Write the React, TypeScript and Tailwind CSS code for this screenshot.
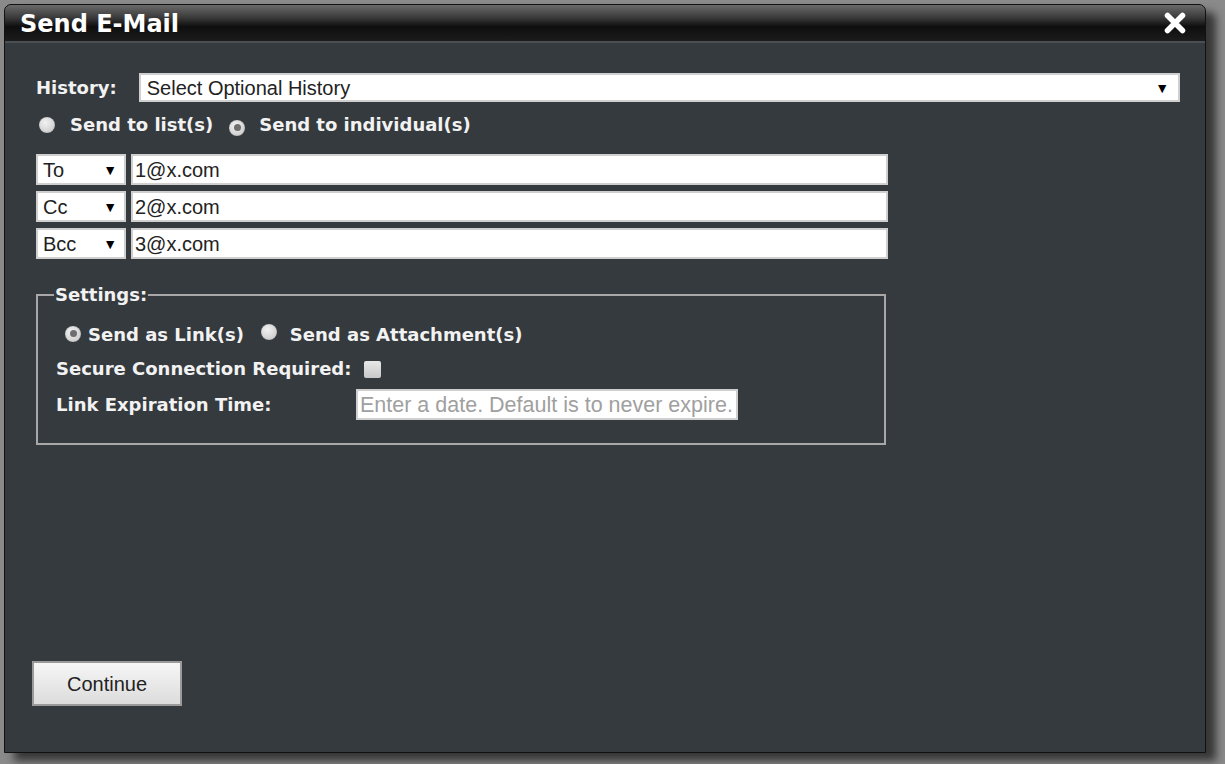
import React from "react";

const Radio = ({ checked }: { checked?: boolean }) => (
  <span className="inline-flex h-[16px] w-[16px] items-center justify-center rounded-full bg-[radial-gradient(circle_at_40%_35%,#f2f2f2,#c2c2c2)] shadow-[inset_0_0_1px_rgba(0,0,0,0.4)]">
    {checked && <span className="h-[7px] w-[7px] rounded-full bg-[#6e6e6e]" />}
  </span>
);

const RecipientRow = ({ kind, email }: { kind: string; email: string }) => (
  <div className="flex items-center gap-[5px]">
    <div className="flex h-[31px] w-[90px] items-center justify-between border-2 border-[#cfcfcf] bg-white pl-[5px] pr-[7px] text-[20px] text-[#222]">
      <span>{kind}</span>
      <span className="text-[14px] text-black">▼</span>
    </div>
    <div className="flex h-[31px] w-[757px] items-center border-2 border-[#cfcfcf] bg-white pl-[2px] text-[20px] text-[#222]">
      {email}
    </div>
  </div>
);

export default function App() {
  return (
    <div className="h-[764px] w-[1225px] overflow-hidden bg-[#8a8a8a] pl-[4px] pt-[4px] font-['Liberation_Sans',Arial,sans-serif]">
      <div className="flex h-[749px] w-[1202px] flex-col overflow-hidden rounded-t-[7px] border border-[#111] bg-[#353a3e] shadow-[10px_8px_8px_rgba(40,40,40,0.85)]">
        {/* Title bar */}
        <div className="flex h-[38px] items-center justify-between border-b-2 border-[#4a4f53] bg-[linear-gradient(#6a6a6a_0%,#3a3a3a_35%,#0e0e0e_60%,#1c1c1c_100%)] pl-[15px] pr-[18px]">
          <span className="mt-[1px] font-['DejaVu_Sans',Verdana,sans-serif] text-[24px] leading-[30px] font-bold text-white">
            Send E-Mail
          </span>
          <svg width="24" height="24" viewBox="0 0 24 24">
            <path d="M4.5 4.5 L19.5 19.5 M19.5 4.5 L4.5 19.5" stroke="#fff" strokeWidth="5.5" strokeLinecap="round" />
          </svg>
        </div>

        {/* Body */}
        <div className="flex flex-1 flex-col pl-[31px] pr-[25px] pt-[30px] font-['DejaVu_Sans',Verdana,sans-serif] text-[18px] leading-[24px] font-bold text-[#f2f2f2]">
          <div className="flex items-center gap-[22px]">
            <span>History:</span>
            <div className="flex h-[29px] flex-1 items-center justify-between border-2 border-[#cfcfcf] bg-white pl-[6px] pr-[9px] font-['Liberation_Sans',Arial,sans-serif] text-[20px] font-normal text-[#222]">
              <span>Select Optional History</span>
              <span className="text-[14px] text-black">▼</span>
            </div>
          </div>

          <div className="mt-[11px] flex items-center pl-[3px]">
            <Radio />
            <span className="ml-[15px]">Send to list(s)</span>
            <span className="ml-[16px]">
              <Radio checked />
            </span>
            <span className="ml-[14px]">Send to individual(s)</span>
          </div>

          <div className="mt-[17px] flex flex-col gap-[6px] font-['Liberation_Sans',Arial,sans-serif] font-normal">
            <RecipientRow kind="To" email="1@x.com" />
            <RecipientRow kind="Cc" email="2@x.com" />
            <RecipientRow kind="Bcc" email="3@x.com" />
          </div>

          <fieldset className="mt-[24px] h-[162px] w-[850px] border-2 border-[#a8a8a8] px-[18px] pb-0">
            <legend className="ml-[-2px] px-[1px]">Settings:</legend>
            <div className="mt-[13px] flex items-center pl-[9px]">
              <Radio checked />
              <span className="ml-[7px] mt-[3px]">Send as Link(s)</span>
              <span className="ml-[17px]">
                <Radio />
              </span>
              <span className="ml-[13px] mt-[3px]">Send as Attachment(s)</span>
            </div>
            <div className="mt-[10px] flex items-center">
              <span>Secure Connection Required:</span>
              <span className="ml-[13px] h-[17px] w-[17px] rounded-[2px] bg-[linear-gradient(#e8e8e8,#c8c8c8)]" />
            </div>
            <div className="mt-[8px] flex items-center">
              <span className="w-[300px]">Link Expiration Time:</span>
              <div className="flex h-[31px] w-[382px] items-center border-2 border-[#cfcfcf] bg-white pl-[2px] font-['Liberation_Sans',Arial,sans-serif] text-[21.5px] font-normal text-[#a0a0a0]">
                Enter a date. Default is to never expire.
              </div>
            </div>
          </fieldset>

          <div className="mt-auto mb-[46px] ml-[-4px]">
            <button className="h-[45px] w-[150px] border-2 border-[#9a9a9a] bg-[linear-gradient(#f6f6f6,#dcdcdc)] font-['Liberation_Sans',Arial,sans-serif] text-[20px] font-normal text-[#222]">
              Continue
            </button>
          </div>
        </div>
      </div>
    </div>
  );
}
